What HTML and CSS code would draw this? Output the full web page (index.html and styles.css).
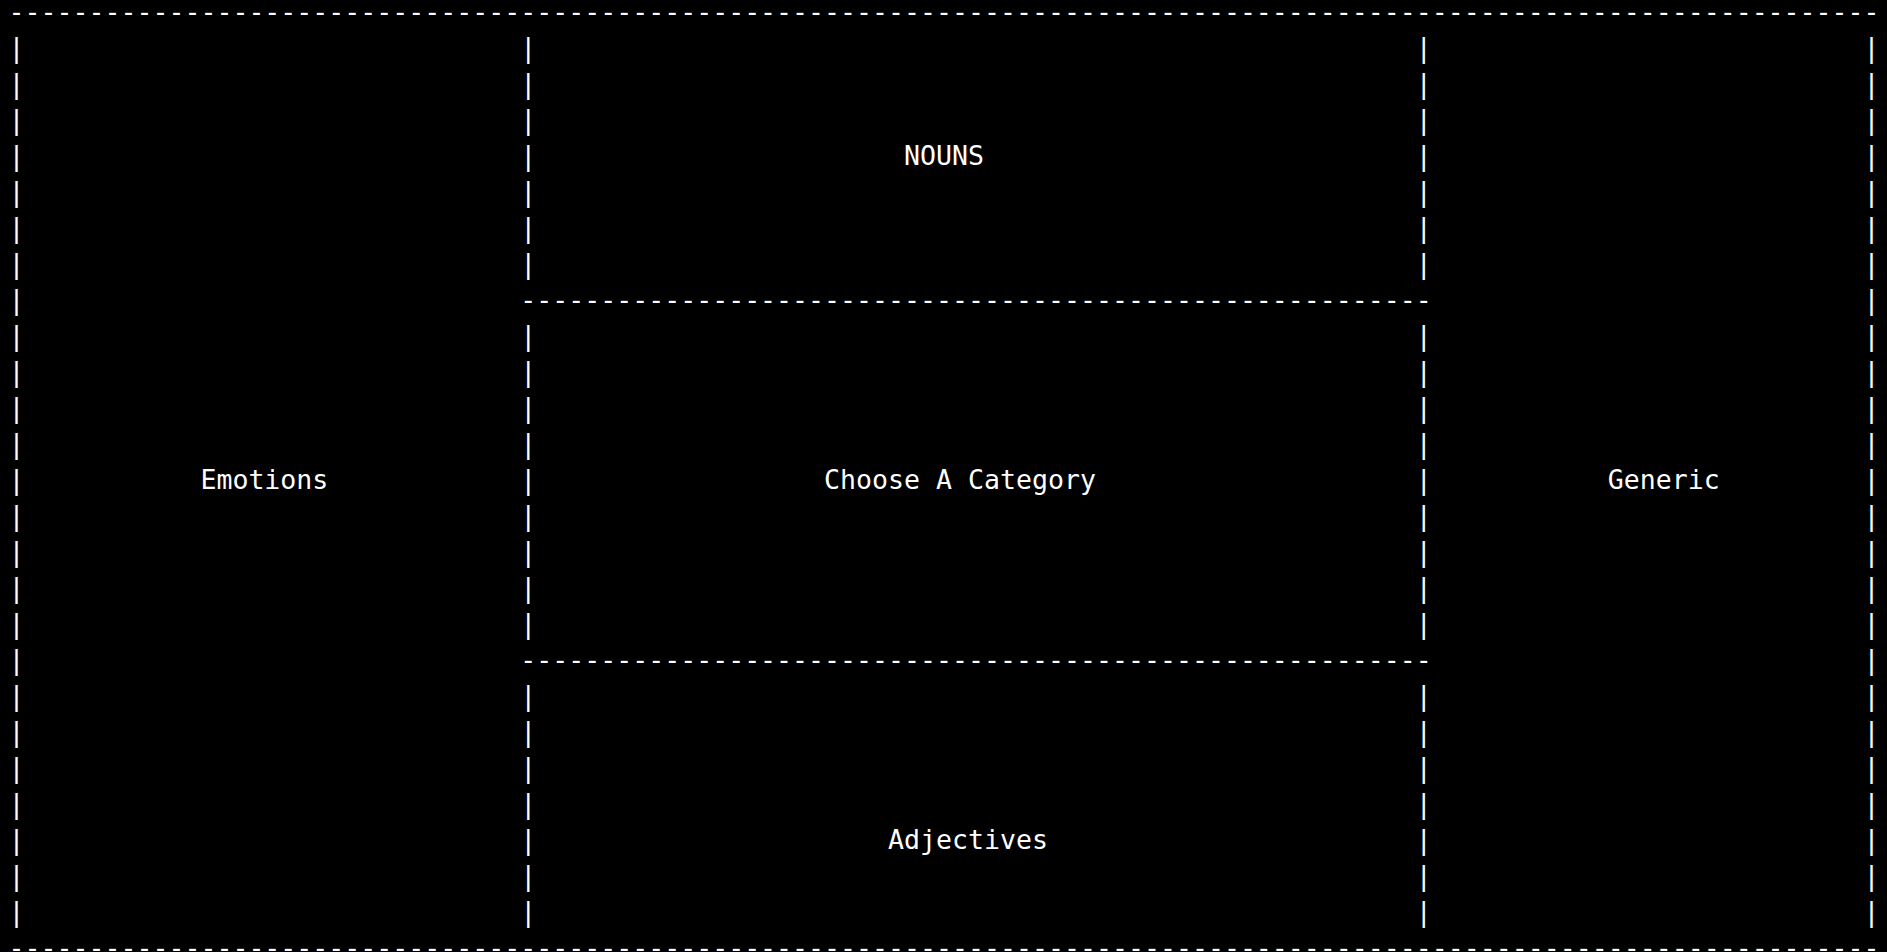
FILE: index.html
```html
<!DOCTYPE html>
<html lang="en">
<head>
<meta charset="utf-8">
<title>Choose A Category</title>
<link rel="stylesheet" href="styles.css">
</head>
<body>
<pre class="terminal">---------------------------------------------------------------------------------------------------------------------
|                               |                                                       |                           |
|                               |                                                       |                           |
|                               |                                                       |                           |
|                               |                       NOUNS                           |                           |
|                               |                                                       |                           |
|                               |                                                       |                           |
|                               |                                                       |                           |
|                               ---------------------------------------------------------                           |
|                               |                                                       |                           |
|                               |                                                       |                           |
|                               |                                                       |                           |
|                               |                                                       |                           |
|           Emotions            |                  Choose A Category                    |           Generic         |
|                               |                                                       |                           |
|                               |                                                       |                           |
|                               |                                                       |                           |
|                               |                                                       |                           |
|                               ---------------------------------------------------------                           |
|                               |                                                       |                           |
|                               |                                                       |                           |
|                               |                                                       |                           |
|                               |                                                       |                           |
|                               |                      Adjectives                       |                           |
|                               |                                                       |                           |
|                               |                                                       |                           |
---------------------------------------------------------------------------------------------------------------------</pre>
</body>
</html>
```

FILE: styles.css
```css
html, body {
  margin: 0;
  padding: 0;
  background: #000;
  height: 100%;
  overflow: hidden;
}

.terminal {
  margin: -6px 0 0 0;
  padding: 0 0 0 8.5px;
  font-family: "DejaVu Sans Mono", "Liberation Mono", monospace;
  font-size: 26.576px;
  line-height: 36px;
  color: #fff;
  white-space: pre;
}
```
